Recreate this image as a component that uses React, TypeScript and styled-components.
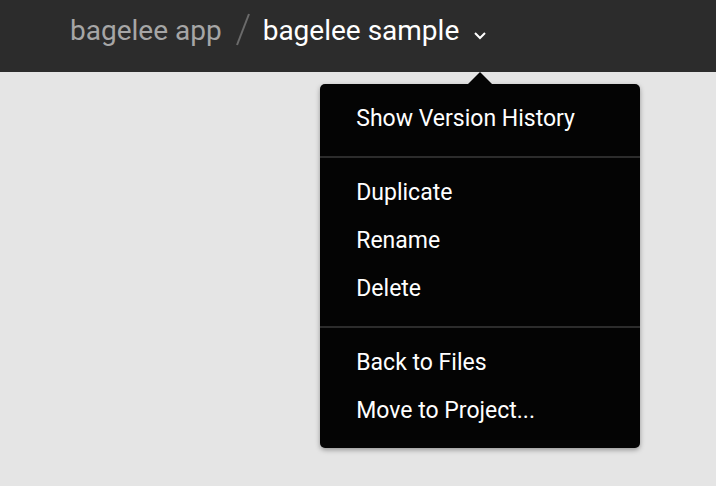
import React from "react";
import styled, { createGlobalStyle } from "styled-components";

const GlobalStyle = createGlobalStyle`
  * { box-sizing: border-box; }
  body { margin: 0; background: #e5e5e5; font-family: Roboto, sans-serif; }
`;

const Page = styled.div`
  min-height: 100vh;
  background: #e5e5e5;
`;

const Header = styled.header`
  padding: 12px 70px 22px;
  background: #2c2c2c;
`;

const Breadcrumb = styled.nav`
  display: flex;
  align-items: center;
  font-size: 28px;
  line-height: 38px;
  white-space: nowrap;
`;

const ProjectLink = styled.a`
  color: #a6a6a6;
  text-decoration: none;
`;

const Slash = styled.svg`
  flex: none;
  width: 16px;
  height: 36px;
  margin: 0 11px 0 14px;
`;

const FileName = styled.span`
  color: #ffffff;
`;

const MenuAnchor = styled.div`
  position: relative;
  display: flex;
  align-items: center;
  height: 38px;
  margin-left: 14px;
`;

const MenuButton = styled.button`
  display: flex;
  padding: 10px 0 0;
  border: 0;
  background: none;
  color: #ffffff;
`;

const Menu = styled.div`
  position: absolute;
  top: 72px;
  left: 50%;
  z-index: 1;
  width: 320px;
  margin-left: -160px;
  border-radius: 5px;
  background: #040404;
  box-shadow: 0 2px 5px rgba(0, 0, 0, 0.35);

  &::before {
    content: "";
    position: absolute;
    bottom: 100%;
    left: 50%;
    margin-left: -12px;
    border: 12px solid transparent;
    border-top: 0;
    border-bottom-color: #040404;
  }
`;

const Group = styled.div`
  padding: 11px 0 13px;

  & + & {
    border-top: 2px solid #2c2c2c;
  }
`;

const Item = styled.button`
  display: block;
  width: 100%;
  padding: 0 36px;
  border: 0;
  background: none;
  color: #ffffff;
  font-family: inherit;
  font-size: 23px;
  line-height: 48px;
  text-align: left;
  white-space: nowrap;
`;

const groups = [
  ["Show Version History"],
  ["Duplicate", "Rename", "Delete"],
  ["Back to Files", "Move to Project..."],
];

export default function App() {
  return (
    <Page>
      <GlobalStyle />
      <Header>
        <Breadcrumb aria-label="Breadcrumb">
          <ProjectLink href="#">bagelee app</ProjectLink>
          <Slash viewBox="0 0 16 36" aria-hidden="true">
            <path d="M13 1 1 32" stroke="#6b6b6b" strokeWidth="2" />
          </Slash>
          <FileName>bagelee sample</FileName>
          <MenuAnchor>
            <MenuButton aria-label="File options" aria-haspopup="menu" aria-expanded="true">
              <svg width="14" height="10" viewBox="0 0 14 10" fill="none">
                <path d="m2 2 5 5 5-5" stroke="currentColor" strokeWidth="2" />
              </svg>
            </MenuButton>
            <Menu role="menu" aria-label="File options">
              {groups.map((items) => (
                <Group key={items[0]} role="group">
                  {items.map((label) => (
                    <Item key={label} role="menuitem">{label}</Item>
                  ))}
                </Group>
              ))}
            </Menu>
          </MenuAnchor>
        </Breadcrumb>
      </Header>
    </Page>
  );
}
